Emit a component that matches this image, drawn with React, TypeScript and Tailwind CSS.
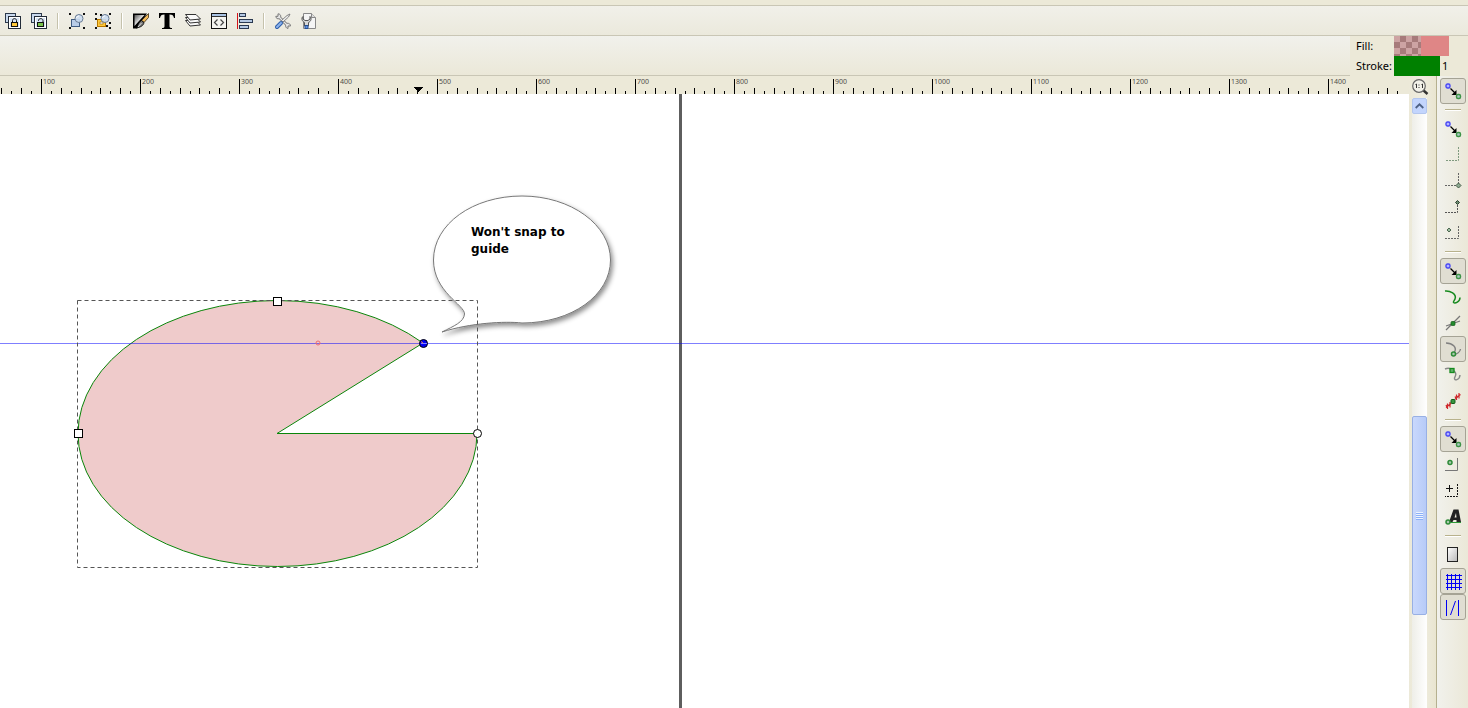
import React from 'react';

interface IconButtonProps {
  label: string;
  active?: boolean;
  children: React.ReactNode;
}

const ToolButton: React.FC<IconButtonProps> = ({ label, children }) => (
  <button aria-label={label} title={label} className="w-[26px] h-[26px] flex items-center justify-center shrink-0">
    {children}
  </button>
);

const SnapButton: React.FC<IconButtonProps> = ({ label, active = false, children }) => (
  <button
    aria-label={label}
    title={label}
    aria-pressed={active}
    className={`w-[26px] h-[26px] flex items-center justify-center shrink-0 rounded-[3px] border ${active ? 'border-[#a5a395] bg-[#e0ded2]' : 'border-transparent'}`}
  >
    {children}
  </button>
);

const Icon: React.FC<{ children: React.ReactNode }> = ({ children }) => (
  <svg width="16" height="16" viewBox="0 0 16 16" fill="none" className="shrink-0 overflow-visible">{children}</svg>
);

const ToolSeparator = () => (
  <div className="w-[2px] h-4 mx-[5px] bg-[#c5c2ac] border-r border-white shrink-0" />
);

const SnapSeparator = () => (
  <div className="h-3 flex items-center shrink-0">
    <div className="w-4 h-[2px] bg-[#b8b28c] border-b border-white" />
  </div>
);

const CloneIcon: React.FC<{ color: string; open?: boolean }> = ({ color, open }) => (
  <Icon>
    <rect x="0.5" y="0.5" width="10" height="9" fill="#c9d9ee" stroke="#2d3a4c" />
    <rect x="3.5" y="3.5" width="12" height="12" fill="#d6e4f5" stroke="#222b38" />
    <rect x="4.5" y="4.5" width="10" height="10" stroke="#fff" />
    <path d={open ? 'M7.5 8V7.500c0-2.500 4.500-2.500 4.500 0V10' : 'M7.500 10V7.500c0-2.500 4-2.500 4 0V10'} stroke="#111" />
    <rect x="6.5" y="9.5" width="6" height="4" fill={color} stroke="#111" />
  </Icon>
);

const GroupIcon: React.FC<{ color: string; inner?: boolean }> = ({ color, inner }) => (
  <Icon>
    <path d="M0 0h2v2H0zM14 0h2v2h-2zM0 14h2v2H0zM14 14h2v2h-2z" fill="#111" />
    {inner && <path d="M5 1h2v2H5zM0 5h2v2H0zM14 9h2v2h-2zM11 12h2v2h-2z" fill="#111" />}
    <rect x="2.5" y="6.5" width="8" height="7" fill={color} stroke={inner ? '#b87800' : '#405c82'} />
    {inner && <rect x="5" y="9" width="3" height="2" fill="#fff" stroke="#8a5b00" strokeWidth=".6" />}
    <circle cx="10" cy="5.5" r="4" fill="#cbdcf0" fillOpacity=".9" stroke="#6a7c94" />
    <path d="M7.5 5c.3-1.200 1.200-2 2.500-2" stroke="#fff" />
  </Icon>
);

const tools = [
  { label: 'Fill and Stroke', icon: (
    <Icon>
      <defs>
        <linearGradient id="strokeShade" x1="0" y1="0" x2="1" y2="1">
          <stop offset="0" stopColor="#555" />
          <stop offset="0.6" stopColor="#fff" />
        </linearGradient>
      </defs>
      <path d="M0 .5h14L4 15.500H0z" fill="#000" />
      <path d="M1.500 2h10L6 8l-4.500 5z" fill="url(#strokeShade)" />
      <path d="M15.500.5v4L11 9.500 8.500 7.500z" fill="#f0b95a" stroke="#3a2a10" strokeWidth=".8" />
      <path d="M8.500 7.500L11 9.500c-.5 3-3 4.500-7.500 5.500C5 13 5 9 8.500 7.500z" fill="#777" stroke="#000" strokeWidth=".9" />
      <path d="M8.500 10L5 14" stroke="#eee" strokeWidth=".8" />
    </Icon>
  ) },
  { label: 'Text and Font', icon: (
    <Icon>
      <path d="M0 0h16v5h-1c-.5-2.500-1.500-3.500-4.500-3.500V13c0 1.500.5 2 2.500 2v1H3v-1c2 0 2.500-.5 2.500-2V1.500C2.500 1.500 1.500 2.500 1 5H0z" fill="#000" />
    </Icon>
  ) },
  { label: 'Layers', icon: (
    <Icon>
      {[9, 6, 3].map(y => (
        <path key={y} d={`M0.500 ${y - 1.500}L11 ${y - 1.500}L15.500 ${y + 3}L5 ${y + 4}Z`} fill="#fafafa" stroke="#333" strokeWidth="1" strokeLinejoin="round" />
      ))}
    </Icon>
  ) },
  { label: 'XML Editor', icon: (
    <Icon>
      <rect x="0.5" y="0.5" width="15" height="15" fill="#f4f4f0" stroke="#111" />
      <path d="M1 1h14v2H1z" fill="#a8c2e3" />
      <path d="M1 3.500h14" stroke="#333" />
      <path d="M6.500 6.500L3.500 9.500l3 3M9.500 6.500l3 3-3 3" stroke="#444" strokeWidth="1.2" />
    </Icon>
  ) },
  { label: 'Align and Distribute', icon: (
    <Icon>
      <path d="M.5 0v16" stroke="#d4141a" />
      <rect x="2.5" y="0.5" width="6" height="3" fill="#b4c8e2" stroke="#2a3950" />
      <rect x="2.5" y="6.5" width="13" height="3" fill="#b4c8e2" stroke="#2a3950" />
      <rect x="2.5" y="12.5" width="9" height="3" fill="#b4c8e2" stroke="#2a3950" />
    </Icon>
  ) },
];

const Node: React.FC<{ x: number; y: number; fill?: string; stroke?: string }> = ({ x, y, fill = '#a9c9ae', stroke = '#2d8b38' }) => (
  <circle cx={x} cy={y} r="2" fill={fill} stroke={stroke} strokeWidth="1.5" />
);

const SnapIcon = () => (
  <Icon>
    <path d="M5.500 5.500l5 5" stroke="#000" strokeWidth="1.3" />
    <path d="M11.500 7v5h-5z" fill="#000" />
    <rect x="1" y="1" width="4" height="4" rx="1.5" fill="#b4b4ff" stroke="#4848f4" strokeWidth="1.4" />
    <rect x="11.5" y="11.5" width="4" height="4" rx="1.5" fill="#a9c9c0" stroke="#3c9346" strokeWidth="1.4" />
  </Icon>
);

const snapGroups = [
  {
    id: 'enable',
    items: [{ label: 'Enable snapping', active: true, icon: <SnapIcon /> }],
  },
  {
    id: 'bbox',
    items: [
      { label: 'Snap bounding boxes', icon: <SnapIcon /> },
      { label: 'Snap to edges of a bounding box', icon: (
        <Icon><path d="M13.5 0v13.500H0" stroke="#7f9a7f" strokeDasharray="2 1" /></Icon>
      ) },
      { label: 'Snap to bounding box corners', icon: (
        <Icon>
          <path d="M13.5 0v12.500H0" stroke="#666" strokeDasharray="2 1" />
          <path d="M13.5 10l2.500 2.500-2.500 2.500-2.500-2.500z" fill="#8eab91" stroke="#445c47" />
        </Icon>
      ) },
      { label: 'Snap midpoints of bounding box edges', icon: (
        <Icon>
          <path d="M12.5 6v7.500H0" stroke="#555" strokeDasharray="2 1" />
          <path d="M12.5 1.500l2 2-2 2-2-2z" fill="#6a8a6d" stroke="#2d3f30" />
        </Icon>
      ) },
      { label: 'Snap centers of bounding boxes', icon: (
        <Icon>
          <path d="M13.5 1v12.500H0" stroke="#666" strokeDasharray="2 1" />
          <path d="M4 3l2 2-2 2-2-2z" fill="#9dbba0" stroke="#4d6851" />
        </Icon>
      ) },
    ],
  },
  {
    id: 'nodes',
    items: [
      { label: 'Snap nodes or handles', active: true, icon: <SnapIcon /> },
      { label: 'Snap to paths', icon: (
        <Icon><path d="M0 2c5-.5 12 3 10 8-.5 1.500-2 2.500-1.500 3.500C10 14.500 15 13 15 8.500" stroke="#168a1e" strokeWidth="1.5" /></Icon>
      ) },
      { label: 'Snap to path intersections', icon: (
        <Icon>
          <path d="M1 15L15 1M1 11l14-5" stroke="#777" strokeWidth="1.3" />
          <rect x="6" y="6.5" width="4" height="4" rx="1" fill="#238b2c" stroke="#145b1a" strokeWidth=".7" />
        </Icon>
      ) },
      { label: 'Snap to cusp nodes', active: true, icon: (
        <Icon>
          <path d="M1 2c6 0 12 4 8 10M9 13c3 0 6-2 6.500-5" stroke="#808080" strokeWidth="1.4" />
          <Node x={8.5} y={13} />
        </Icon>
      ) },
      { label: 'Snap to smooth nodes', icon: (
        <Icon>
          <path d="M0 2c3-1.500 6-.5 8 1 4 3 3 5 1.500 8-.5 3 5 2.500 5.500-3" stroke="#888" strokeWidth="1.4" />
          <rect x="5" y="1.5" width="4" height="4" fill="#5fae68" stroke="#168a1e" strokeWidth="1.3" />
        </Icon>
      ) },
      { label: 'Snap midpoints of line segments', icon: (
        <Icon>
          <path d="M2 13.500L14 3" stroke="#777" />
          <path d="M2.500 10.500v5.500M5 9v5.500M1 14.500l5-4M1 12l1 2M11.500 1.500v5.500M14 0v5.500M10 5.500l5.500-4M10 3.500l1 2" stroke="#d0282c" strokeWidth="1.2" />
          <rect x="6" y="6.5" width="4" height="4" rx="1" fill="#37963f" stroke="#145b1a" />
        </Icon>
      ) },
    ],
  },
  {
    id: 'others',
    items: [
      { label: 'Snap other points', active: true, icon: <SnapIcon /> },
      { label: 'Snap centers of objects', icon: (
        <Icon>
          <path d="M12.5 1v12.500H0" stroke="#777" />
          <Node x={5} y={5.5} />
        </Icon>
      ) },
      { label: "Snap an item's rotation center", icon: (
        <Icon>
          <path d="M4.5 2v7M1 5.500h7" stroke="#111" />
          <path d="M12.5 1v12.500H0" stroke="#111" strokeDasharray="2 1" />
        </Icon>
      ) },
      { label: 'Snap text anchors and baselines', icon: (
        <Icon>
          <path d="M1 13.500h15" stroke="#2d9b38" />
          <path fillRule="evenodd" d="M8.500.5h5L16 13h-4.500v-2H8.500l-1 2H4zM11 4L9.500 8.500h2z" fill="#222" />
          <Node x={3} y={13} />
        </Icon>
      ) },
    ],
  },
  {
    id: 'page',
    items: [
      { label: 'Snap to the page border', icon: (
        <Icon>
          <defs>
            <linearGradient id="pageShade" x1="0" y1="0" x2="1" y2="1">
              <stop offset="0" stopColor="#fff" />
              <stop offset="1" stopColor="#b8b8b8" />
            </linearGradient>
          </defs>
          <rect x="2.5" y="0.5" width="10" height="14" fill="url(#pageShade)" stroke="#222" />
        </Icon>
      ) },
      { label: 'Snap to grids', active: true, icon: (
        <Icon><path d="M2.5 1v16M6.5 1v16M10.5 1v16M14.5 1v16M1 2.500h16M1 6.500h16M1 10.500h16M1 14.500h16" stroke="#0000f4" /></Icon>
      ) },
      { label: 'Snap guides', active: true, icon: (
        <Icon><path d="M1.5 1v16M13.5 1v16M5.500 16L10.500 2" stroke="#0000f4" /></Icon>
      ) },
    ],
  },
];

const RULER_START = 41;
const RULER_STEP = 99;
const majors = Array.from({ length: 14 }, (_, i) => i + 1);
const ticks = Array.from({ length: 142 }, (_, i) => i - 4);

const Ruler = () => (
  <svg className="block w-full h-[18px] shrink-0" shapeRendering="crispEdges">
    {ticks.map(i => {
      const x = Math.round(RULER_START + (i * RULER_STEP) / 10);
      const height = i % 10 === 0 ? 15 : i % 2 === 0 ? 6 : 3;
      return <rect key={i} x={x} y={18 - height} width="1" height={height} fill="#000" />;
    })}
    {majors.map(n => (
      <text key={n} x={RULER_START + (n - 1) * RULER_STEP + 2} y="8" className="text-[7px] font-['Noto_Sans',sans-serif]" fill="#4f4e48">
        {n * 100}
      </text>
    ))}
    <path d="M414 11h9l-4 5h-1z" fill="#000" />
  </svg>
);

const BUBBLE = 'M433.5 166C433.5 130 473 102 522 102S610.500 131 610.500 166C610.500 201 572 229 522 229C505 227 470 229 442 238C454 232 464 228 464.500 220C465 211 433.500 198 433.500 166Z';

const Canvas = () => (
  <div className="relative flex-1 min-h-0 bg-white overflow-hidden">
    <svg className="absolute inset-0 w-full h-full">
      <defs>
        <filter id="bubbleShadow" x="-10%" y="-10%" width="120%" height="125%">
          <feDropShadow dx="2" dy="3" stdDeviation="2.5" floodColor="#000" floodOpacity=".45" />
        </filter>
      </defs>
      <path
        d="M277 339.500H477A199.500 133 0 0 1 277.500 472.500A199.500 133 0 0 1 78 339.500A199.500 133 0 0 1 277.500 206.500A199.500 133 0 0 1 423 249Z"
        fill="#efcbcb"
        stroke="#0a860a"
      />
      <rect x="679" y="0" width="3" height="100%" fill="#5e5e5e" />
      <rect x="0" y="249" width="100%" height="1" fill="#0000ff" fillOpacity=".5" />
      <circle cx="318" cy="249" r="2" fill="none" stroke="#f26d6d" />
      <path d={BUBBLE} fill="#fff" stroke="#777" filter="url(#bubbleShadow)" />
      <rect x="77.5" y="206.5" width="400" height="267" fill="none" stroke="#555" strokeDasharray="4 3" />
      <g fill="#fff" stroke="#000">
        <rect x="273.5" y="203.5" width="8" height="8" />
        <rect x="74.5" y="335.5" width="8" height="8" />
        <circle cx="477.5" cy="339.5" r="4" />
        <circle cx="423.5" cy="249.5" r="4" fill="#0000f0" />
      </g>
      <path d="M421 249.500h6" stroke="#7f7fff" />
      <path d="M421 247.500l2 1.500" stroke="#ef7d52" />
    </svg>
    <p className="absolute left-[471px] top-[130px] w-[110px] text-[12px] leading-[17px] font-bold text-black font-['DejaVu_Sans',sans-serif]">
      Won't snap to guide
    </p>
  </div>
);

const StyleIndicator = () => (
  <div className="w-[118px] h-[41px] shrink-0 bg-[#ece9d8] pl-[6px] text-[11px]">
    <div className="h-5 flex items-center">
      <span className="w-[38px]">Fill:</span>
      <button aria-label="Fill colour" className="flex w-[55px] h-5">
        <svg className="w-[27px] h-5" shapeRendering="crispEdges">
          <defs>
            <pattern id="checker" width="12" height="12" patternUnits="userSpaceOnUse">
              <rect width="12" height="12" fill="#cda3a3" />
              <path d="M6 0h6v6H6zM0 6h6v6H0z" fill="#a77b7b" />
            </pattern>
          </defs>
          <rect width="27" height="20" fill="url(#checker)" />
        </svg>
        <span className="flex-1 h-5 bg-[#df8686]" />
      </button>
    </div>
    <div className="h-5 flex items-center">
      <span className="w-[38px]">Stroke:</span>
      <button aria-label="Stroke colour" className="w-[46px] h-5 bg-[#008000]" />
      <span className="ml-[2px]">1</span>
    </div>
  </div>
);

const VerticalScrollbar = () => (
  <div className="w-[27px] shrink-0 flex flex-col pl-[3px] bg-linear-to-r from-[#ece9d8] via-[#efede0] to-[#e9e5d0]">
    <button aria-label="Zoom 1:1" className="h-[22px] w-4 shrink-0 flex items-center">
      <svg width="16" height="16" viewBox="0 0 16 16" className="overflow-visible">
        <path d="M11 11l4.500 4" stroke="#333" strokeWidth="2.5" />
        <circle cx="7" cy="7" r="6.3" fill="#f2f1e9" stroke="#666" strokeWidth="1.2" />
        <path d="M3.500 5.500L4.500 5v4M9.500 5.500l1-.5v4" fill="none" stroke="#333" />
        <path d="M6.500 5.500h1v1h-1zM6.500 8h1v1h-1z" fill="#333" />
      </svg>
    </button>
    <div className="flex-1 w-[15px] flex flex-col bg-linear-to-r from-[#eeeee8] to-white">
      <button aria-label="Scroll up" className="h-4 shrink-0 flex items-center justify-center rounded-[2px] border border-[#b3c6ee] bg-[#c3d5fd]">
        <svg width="9" height="6" viewBox="0 0 9 6" fill="none"><path d="M.7 5L4.500 1.300 8.300 5" stroke="#4d6185" strokeWidth="1.8" /></svg>
      </button>
      <div className="h-[302px] shrink-0" />
      <button aria-label="Scroll thumb" className="h-[199px] shrink-0 flex flex-col items-center justify-center rounded-[2px] border border-[#98b0e4] bg-linear-to-r from-[#c9d8fc] to-[#b7cbf8]">
        <span className="w-[7px] h-px bg-[#eef4fe]" />
        <span className="w-[7px] h-px bg-[#8cb0f8]" />
        <span className="w-[7px] h-px bg-[#eef4fe]" />
        <span className="w-[7px] h-px bg-[#8cb0f8]" />
        <span className="w-[7px] h-px bg-[#eef4fe]" />
        <span className="w-[7px] h-px bg-[#8cb0f8]" />
        <span className="w-[7px] h-px bg-[#eef4fe]" />
        <span className="w-[7px] h-px bg-[#8cb0f8]" />
      </button>
    </div>
  </div>
);

const App: React.FC = () => {
  return (
    <div className="h-screen flex flex-col overflow-hidden bg-[#ece9d8] text-black font-['Noto_Sans',sans-serif]">
      <div className="h-[6px] shrink-0 border-b border-[#c9c6b5]" />

      <div className="h-[30px] shrink-0 flex items-center border-b border-[#c9c6b5] bg-linear-to-b from-[#f1f0ea] to-[#ebe9dc]">
        <ToolButton label="Create clone"><CloneIcon color="#ffc83b" /></ToolButton>
        <ToolButton label="Unlink clone"><CloneIcon color="#78c24c" open /></ToolButton>
        <ToolSeparator />
        <ToolButton label="Group"><GroupIcon color="#b9cde8" /></ToolButton>
        <ToolButton label="Ungroup"><GroupIcon color="#ffc93a" inner /></ToolButton>
        <ToolSeparator />
        {tools.map(tool => (
          <ToolButton key={tool.label} label={tool.label}>{tool.icon}</ToolButton>
        ))}
        <ToolSeparator />
        <ToolButton label="Preferences">
          <Icon>
            <path d="M4 4l8.500 8.500" stroke="#777" strokeWidth="3" />
            <path d="M3 .8v2.500H.8C.8 5.500 3 6.500 5 5.200 6.500 3 5.500 1 3 .8zM13 15.500V13h2.500c0-2.200-2.200-3.500-4.200-2.200-1.500 2.200-.3 4.500 1.700 4.700z" fill="#e4e4e4" stroke="#777" />
            <path d="M4 4l8.500 8.500" stroke="#e8e8e8" strokeWidth="1.3" />
            <path d="M15 1l-1.500 3L8 9 6.500 7.500 12 2.500z" fill="#eee" stroke="#777" strokeWidth=".9" />
            <path d="M6 10l-4 4" stroke="#2e5eaa" strokeWidth="4" strokeLinecap="round" />
            <path d="M6 10l-4 4" stroke="#8db4ec" strokeWidth="2" strokeLinecap="round" />
          </Icon>
        </ToolButton>
        <ToolButton label="Document Properties">
          <Icon>
            <path d="M2.5.5h8l4 4v11h-12z" fill="#f5f5f5" stroke="#888" />
            <path d="M10.500.5v4h4" fill="#ddd" stroke="#888" />
            <path d="M2 3.500C0 5 1 8.500 3.500 9.500V13h4V9.500C10 8.500 11 5 9 3.500V6L7 7.500H4L2 6z" fill="#d8d8d8" stroke="#555" />
            <path d="M4 12.500h3v3H4z" fill="#5f90dc" stroke="#244f96" />
          </Icon>
        </ToolButton>
      </div>

      <div className="h-[40px] shrink-0 flex">
        <div className="flex-1 border-b border-[#c9c6b5] bg-linear-to-b from-[#f1f1ec] to-[#ebe8d8]" />
        <StyleIndicator />
      </div>

      <div className="flex-1 min-h-0 flex">
        <main className="flex-1 min-w-0 flex flex-col">
          <Ruler />
          <Canvas />
        </main>
        <VerticalScrollbar />
        <aside className="w-[32px] shrink-0 flex flex-col items-center pt-[2px] border-l border-[#b5b08f] bg-linear-to-r from-[#f1f1ec] to-[#ebe8d8]">
          {snapGroups.map((group, i) => (
            <React.Fragment key={group.id}>
              {i > 0 && <SnapSeparator />}
              {group.items.map(item => (
                <SnapButton key={item.label} label={item.label} active={'active' in item && item.active}>
                  {item.icon}
                </SnapButton>
              ))}
            </React.Fragment>
          ))}
        </aside>
      </div>
    </div>
  );
};

export default App;
